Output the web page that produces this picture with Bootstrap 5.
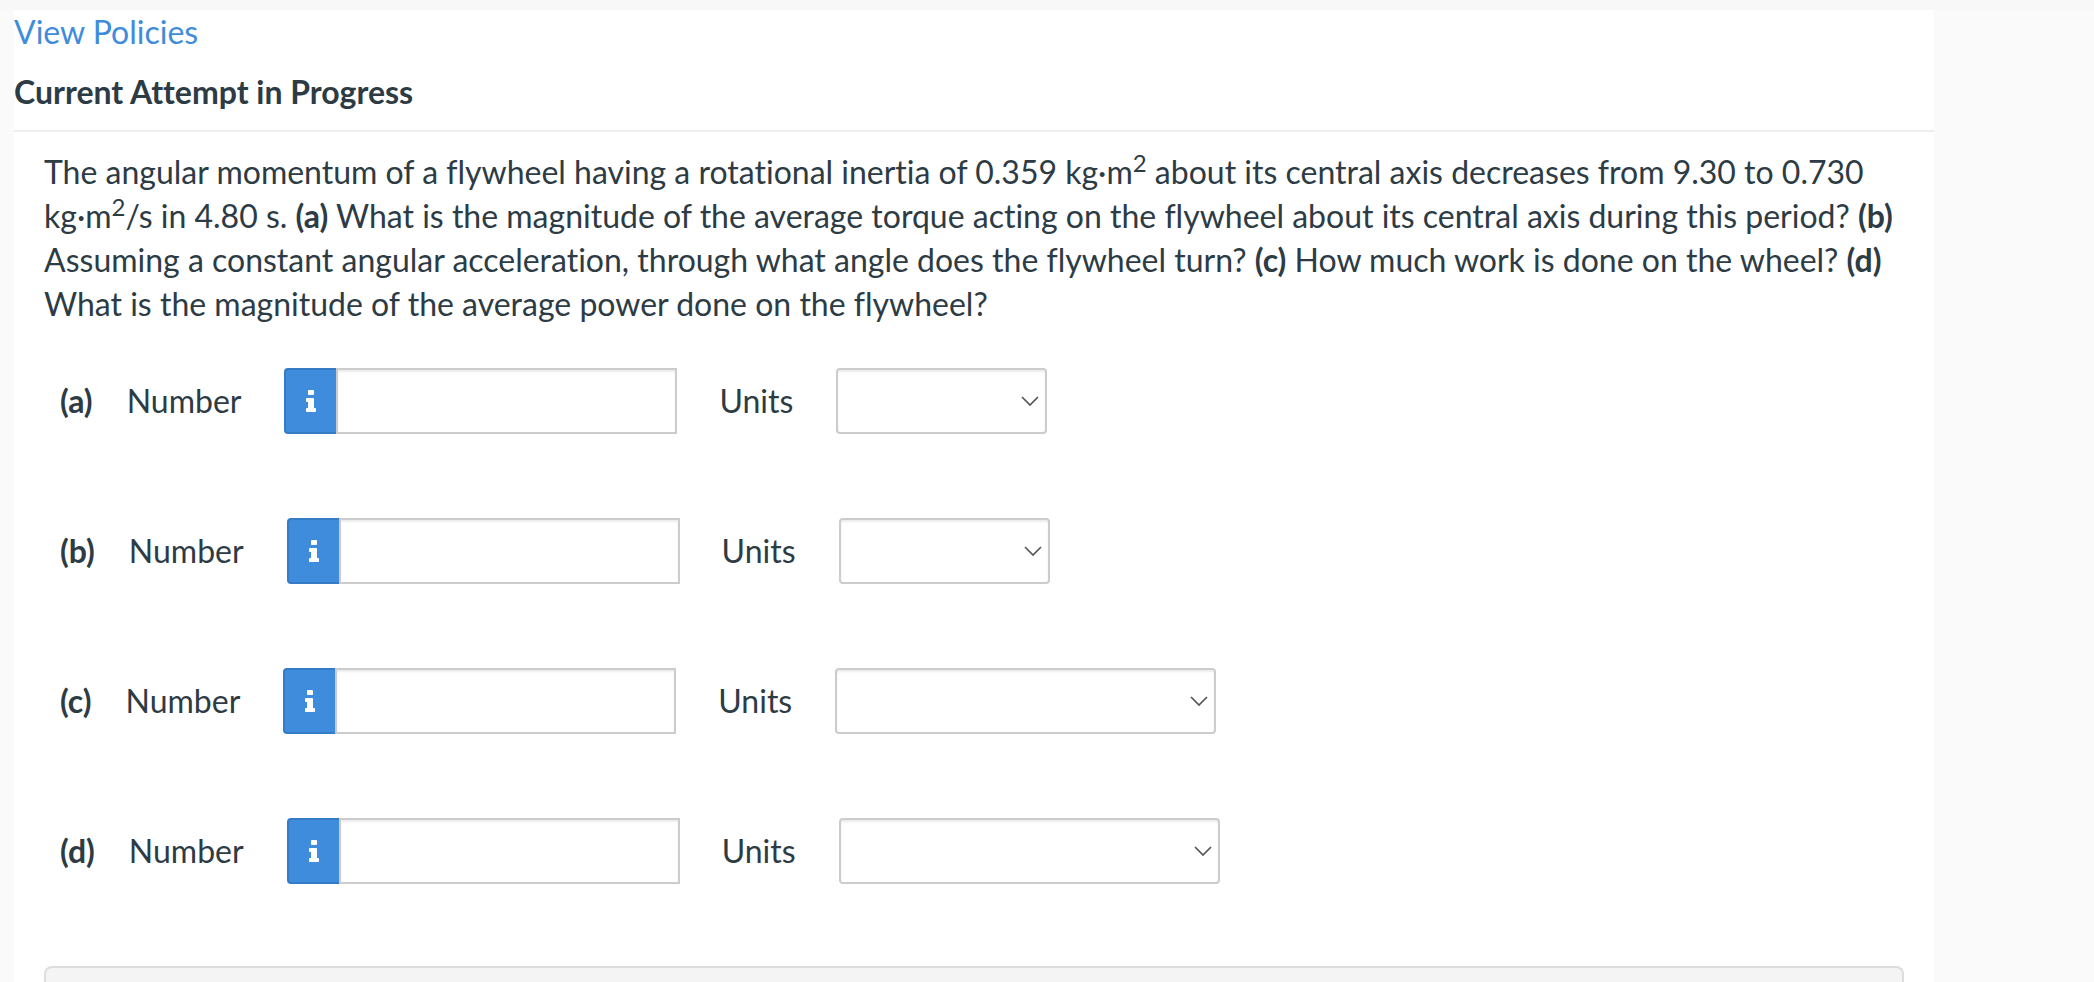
<!DOCTYPE html>
<html lang="en">
<head>
<meta charset="utf-8">
<meta name="viewport" content="width=device-width, initial-scale=1">
<title>Current Attempt in Progress</title>
<link href="https://cdn.jsdelivr.net/npm/bootstrap@5.3.0/dist/css/bootstrap.min.css" rel="stylesheet">
<style>
  body {
    font-family: Lato, "Liberation Sans", sans-serif;
    font-size: 32px;
    line-height: 44px;
    font-variant-ligatures: none;
    color: #2d3b45;
    background: #fafafa;
  }
  .top-strip { height: 10px; background: #f8f8f8; }
  .sheet { margin: 0 160px 0 14px; background: #fff; }
  .policy-link { color: #3f8cdc; }
  .attempt-title {
    font-size: 32px;
    line-height: 44px;
    padding: 16px 0;
    border-bottom: 2px solid #eee;
  }
  .question { padding: 18px 30px 0; }
  .question-text { margin-bottom: 42px; }
  .answers { display: flex; flex-direction: column; gap: 84px; padding-left: 16px; margin-bottom: 82px; }
  .part-label { margin-right: 34px; }
  .field-label { margin-right: 43px; }
  .number-group { width: 393px; margin-right: 42px; }
  .info-btn {
    width: 52px;
    height: 66px;
    padding: 0;
    border: 2px solid #347cc5;
    border-right: 0;
    border-radius: 4px 0 0 4px;
    background: #3f8cdc;
    color: #fff;
  }
  .info-btn svg { display: block; margin: 0 auto; }
  .number-group .number-box, .unit-box {
    height: 66px;
    font-size: 32px;
    border: 2px solid #ccc;
    box-shadow: inset 0 2px 2px rgba(0, 0, 0, .075);
  }
  .number-group .number-box { margin-left: 0 !important; border-radius: 0; }
  .unit-box {
    width: 211px;
    border-radius: 4px;
    background-color: #fff;
    background-image: url("data:image/svg+xml,%3Csvg xmlns='http://www.w3.org/2000/svg' viewBox='0 0 18 10'%3E%3Cpath d='M1 1l8 8 8-8' fill='none' stroke='%23555' stroke-width='1.7'/%3E%3C/svg%3E");
    background-size: 18px 10px;
    background-position: right 6px center;
  }
  .unit-box-wide { width: 381px; }
  .action-bar {
    min-height: 16px;
    background: #f4f4f4;
    border: 2px solid #ddd;
    border-bottom: 0;
    border-radius: 8px 8px 0 0;
  }
</style>
</head>
<body class="d-flex flex-column min-vh-100">
<svg class="d-none" aria-hidden="true">
  <symbol id="info" viewBox="0 128 640 1408">
    <path fill="currentColor" d="M640 1344v128q0 26-19 45t-45 19h-512q-26 0-45-19t-19-45v-128q0-26 19-45t45-19h64v-384h-64q-26 0-45-19t-19-45v-128q0-26 19-45t45-19h384q26 0 45 19t19 45v576h64q26 0 45 19t19 45zm-128-1152v192q0 26-19 45t-45 19h-256q-26 0-45-19t-19-45v-192q0-26 19-45t45-19h256q26 0 45 19t19 45z"/>
  </symbol>
</svg>
<div class="top-strip"></div>
<main class="sheet d-flex flex-column flex-grow-1">
  <a class="policy-link text-decoration-none align-self-start" href="#policies">View Policies</a>
  <h1 class="attempt-title fw-bold mb-0">Current Attempt in Progress</h1>
  <section class="question d-flex flex-column flex-grow-1">
    <p class="question-text">The angular momentum of a flywheel having a rotational inertia of 0.359 kg·m<sup>2</sup> about its central axis decreases from 9.30 to 0.730 kg·m<sup>2</sup>/s in 4.80 s. <b>(a)</b> What is the magnitude of the average torque acting on the flywheel about its central axis during this period? <b>(b)</b> Assuming a constant angular acceleration, through what angle does the flywheel turn? <b>(c)</b> How much work is done on the wheel? <b>(d)</b> What is the magnitude of the average power done on the flywheel?</p>
    <form class="answers">
      <div class="d-flex align-items-center">
        <b class="part-label">(a)</b>
        <label class="field-label" for="num-a">Number</label>
        <div class="input-group flex-nowrap number-group">
          <button class="btn info-btn" type="button" aria-label="Input help"><svg width="10" height="22"><use href="#info"/></svg></button>
          <input class="form-control number-box" id="num-a" type="text">
        </div>
        <label class="field-label" for="unit-a">Units</label>
        <select class="form-select unit-box" id="unit-a"><option></option></select>
      </div>
      <div class="d-flex align-items-center">
        <b class="part-label">(b)</b>
        <label class="field-label" for="num-b">Number</label>
        <div class="input-group flex-nowrap number-group">
          <button class="btn info-btn" type="button" aria-label="Input help"><svg width="10" height="22"><use href="#info"/></svg></button>
          <input class="form-control number-box" id="num-b" type="text">
        </div>
        <label class="field-label" for="unit-b">Units</label>
        <select class="form-select unit-box" id="unit-b"><option></option></select>
      </div>
      <div class="d-flex align-items-center">
        <b class="part-label">(c)</b>
        <label class="field-label" for="num-c">Number</label>
        <div class="input-group flex-nowrap number-group">
          <button class="btn info-btn" type="button" aria-label="Input help"><svg width="10" height="22"><use href="#info"/></svg></button>
          <input class="form-control number-box" id="num-c" type="text">
        </div>
        <label class="field-label" for="unit-c">Units</label>
        <select class="form-select unit-box unit-box-wide" id="unit-c"><option></option></select>
      </div>
      <div class="d-flex align-items-center">
        <b class="part-label">(d)</b>
        <label class="field-label" for="num-d">Number</label>
        <div class="input-group flex-nowrap number-group">
          <button class="btn info-btn" type="button" aria-label="Input help"><svg width="10" height="22"><use href="#info"/></svg></button>
          <input class="form-control number-box" id="num-d" type="text">
        </div>
        <label class="field-label" for="unit-d">Units</label>
        <select class="form-select unit-box unit-box-wide" id="unit-d"><option></option></select>
      </div>
    </form>
    <div class="action-bar flex-grow-1"></div>
  </section>
</main>
<script src="https://cdn.jsdelivr.net/npm/bootstrap@5.3.0/dist/js/bootstrap.bundle.min.js"></script>
</body>
</html>
